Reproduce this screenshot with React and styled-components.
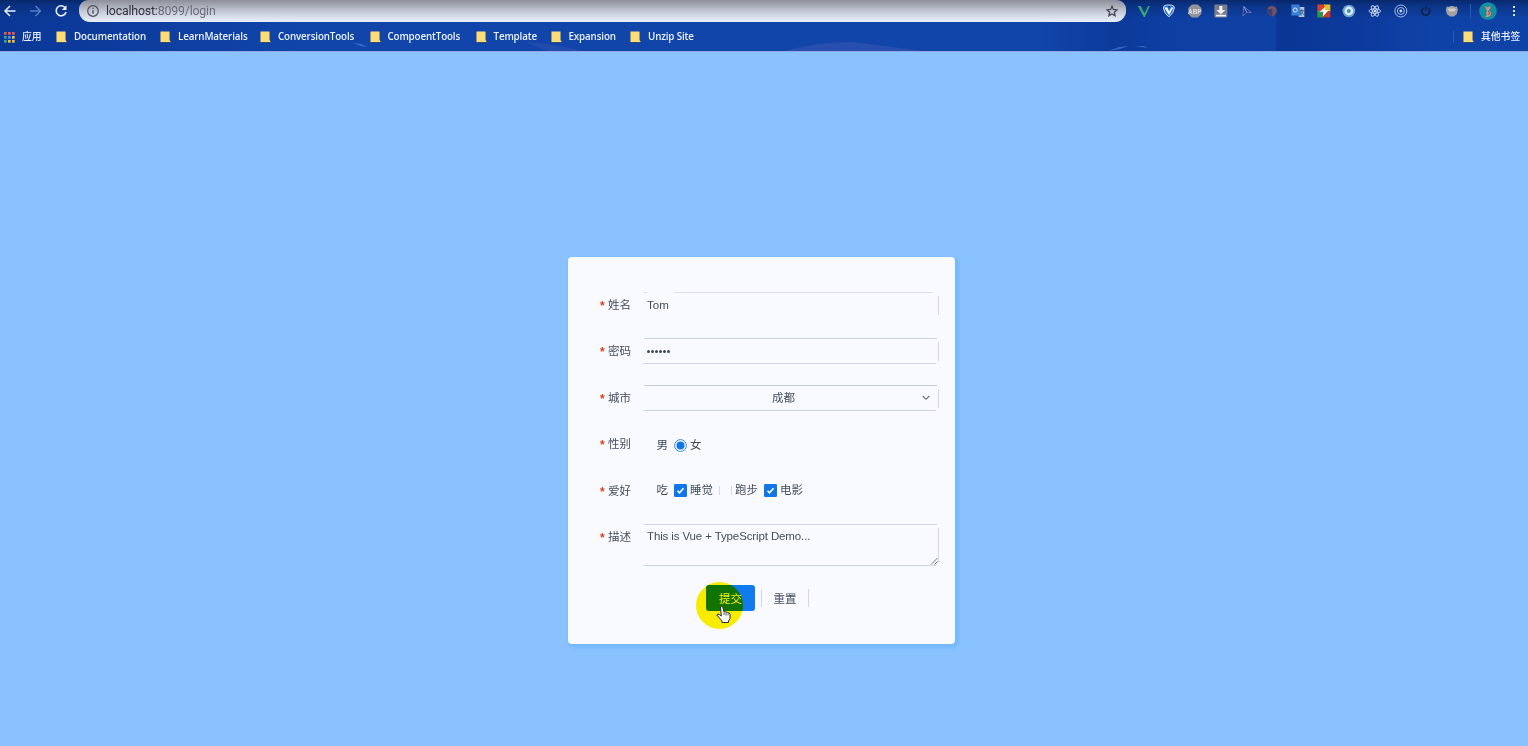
import React from "react";
import styled, { createGlobalStyle } from "styled-components";

const Global = createGlobalStyle`
  * { box-sizing: border-box; }
  body { margin: 0; overflow: hidden; font-family: "Liberation Sans", "Noto Sans CJK SC", sans-serif; }
`;

const Window = styled.div`
  display: flex;
  flex-direction: column;
  width: 1528px;
  height: 746px;
  background: #8ac2ff;
`;

const Chrome = styled.header`
  position: relative;
  height: 52px;
  flex: none;
  background: linear-gradient(90deg, #0b3896 0, #0c3b9c 100px, #1145a9 300px, #1145a9 1040px, #0b3a9a 1115px, #0e40a4 1190px, #0f41a5 1275px, #0a3795 1277px, #0c3a9c 1360px, #0f42a6 1430px, #0f42a6 100%);
  border-bottom: 1px solid #8fa5e6;
`;

const Scenery = styled.svg`
  position: absolute;
  left: 0;
  top: 0;
  pointer-events: none;
`;

const Toolbar = styled.div`
  position: relative;
  display: flex;
  align-items: center;
  height: 22px;
  background: linear-gradient(180deg, rgba(7, 36, 98, .85) 0, rgba(9, 45, 118, .6) 6px, rgba(11, 54, 145, 0) 18px);
`;

const NavButtons = styled.div`
  display: flex;
  gap: 10px;
  width: 79px;
  padding-left: 2px;
`;

const Address = styled.div`
  display: flex;
  align-items: center;
  width: 1047px;
  height: 22px;
  padding: 0 7px;
  border-radius: 9px 9px 11px 11px;
  background: linear-gradient(180deg, #8d8f9b 0, #a9adb8 6px, #c3c7d3 11px, #d5dbe8 16px, #eaf1fa 22px);
  font: 12.4px/22px Roboto, sans-serif;
  color: #696c76;
`;

const Url = styled.span`
  flex: 1;
  margin-left: 6px;
  letter-spacing: -.2px;
  b { font-weight: 400; color: #30333b; }
`;

const Extensions = styled.div`
  display: flex;
  width: 334px;
  margin-left: 4.8px;
  svg { flex: none; width: 25.7px; height: 18px; }
`;

const Divider = styled.i`
  width: 1px;
  height: ${(p) => p.$h}px;
  margin-left: ${(p) => p.$ml || 0}px;
  background: #2d59b5;
`;

const Avatar = styled.svg`
  margin-left: 8px;
  margin-right: 14px;
`;

const Bookmarks = styled.nav`
  position: relative;
  display: flex;
  align-items: center;
  height: 30px;
  padding-left: 4px;
  color: #eaf1ff;
  font: 600 9.8px/14px "Open Sans", "Noto Sans CJK SC", sans-serif;
`;

const Bookmark = styled.span`
  display: flex;
  align-items: center;
  flex: none;
  width: ${(p) => p.$w}px;
  margin-left: ${(p) => p.$ml || 0}px;
  gap: 7px;
  white-space: nowrap;
  letter-spacing: -.14px;
`;

const Cjk = styled.span`
  font-weight: 500;
  letter-spacing: 0;
`;

const Spacer = styled.span`
  flex: 1;
`;

const Page = styled.main`
  flex: 1;
  padding: 205px 0 0 568px;
`;

const Card = styled.form`
  position: relative;
  width: 387px;
  height: 387px;
  padding: 35px 16px 0 31px;
  border-radius: 4px;
  background: #f8faff;
  box-shadow: 2px 2px 3px 2px #76b9ff;
  color: #454d5c;
  font-size: 11.5px;
`;

const Rows = styled.div`
  display: grid;
  grid-template-rows: 46px 47px 46px 47px 46px 61px 26px;
`;

const Row = styled.div`
  display: flex;
`;

const Label = styled.label`
  display: flex;
  width: 43px;
  gap: 3px;
  padding-left: 1px;
  height: 26px;
  line-height: 27px;
  flex: none;
  white-space: nowrap;
  &::before { content: "*"; width: 5px; color: #d5451b; font: 700 12px/29px "Liberation Sans", sans-serif; }
`;

const line = (c) => `linear-gradient(${c}, ${c})`;

const gappedTop = "linear-gradient(90deg, #d8e3f1 3px, transparent 3px 30px, #d8e3f1 30px 289px, transparent 289px)";

const Field = styled.div`
  position: relative;
  display: flex;
  width: 297px;
  height: ${(p) => p.$h || 26}px;
  padding: 0 8px 0 5px;
  line-height: 26px;
  background-repeat: no-repeat;
  background-image: ${line("#cfd8e6")}, ${(p) => p.$top || line("#cfd8e6")}, ${(p) => line(p.$bottom || "#cfd8e6")};
  background-size: 1px calc(100% - 7px), 293px 1px, 293px 1px;
  background-position: right 4px, 2px 0, 1px 100%;
`;

const Password = styled.span`
  display: flex;
  align-items: center;
  gap: 1px;
  padding-top: 1px;
  i { width: 3px; height: 3px; border-radius: 50%; background: #3f4758; }
`;

const Chosen = styled.span`
  flex: 1;
  padding-right: 11px;
  text-align: center;
`;

const Chevron = styled.svg`
  margin: 9px 1px 0 -9px;
`;

const Grip = styled.svg`
  position: absolute;
  right: 0;
  bottom: 0;
`;

const Message = styled.span`
  line-height: 24px;
  letter-spacing: -.12px;
  white-space: nowrap;
`;

const Options = styled.div`
  display: flex;
  align-items: center;
  height: 26px;
  padding-left: 14.5px;
  margin-top: ${(p) => p.$mt}px;
  line-height: 26px;
  svg { margin: 0 3px 0 6px; }
`;

const BoxTrace = styled.i`
  width: 13px;
  height: 9px;
  margin: 1px 3px 0 6px;
  border: solid #d4dae5;
  border-width: 0 1px;
`;

const Actions = styled.div`
  display: flex;
  padding-left: 107px;
`;

const Submit = styled.button`
  width: 49px;
  height: 26px;
  padding: 0;
  border: 0;
  border-radius: 3px;
  background: #117aec;
  color: #fff;
  font: 11.5px/24px "Noto Sans CJK SC", sans-serif;
`;

const Reset = styled.button`
  width: 48px;
  height: 18px;
  margin: 4px 0 0 6px;
  padding: 0 0 1px;
  border: solid #cfd8e6;
  border-width: 0 1px;
  background: none;
  color: #454d5c;
  font: 11.5px/16px "Noto Sans CJK SC", sans-serif;
`;

const Spotlight = styled.i`
  position: absolute;
  left: 128px;
  top: 325px;
  width: 47px;
  height: 47px;
  border-radius: 50%;
  background: #fef000;
  mix-blend-mode: multiply;
`;

const Pointer = styled.svg`
  position: absolute;
  left: 148px;
  top: 348px;
`;

const Folder = () => (
  <svg width="11" height="13" viewBox="0 0 11 13">
    <path d="M0 1h10v8.500l1 2.500H0z" fill="#384d68" opacity=".8" />
    <path d="M.5 .5h9v8.500l1 1.500V11H.5z" fill="#fbdc79" />
  </svg>
);

const Apps = () => {
  const colors = ["#ea5b50", "#ea5b50", "#ea5b50", "#36a77c", "#4d8ff5", "#f4bd3a", "#36a77c", "#f4bd3a", "#f4bd3a"];
  return (
    <svg width="11" height="11" viewBox="0 0 11 11">
      {colors.map((c, i) => (
        <rect key={i} x={(i % 3) * 4} y={Math.floor(i / 3) * 4} width="2.7" height="2.7" fill={c} />
      ))}
    </svg>
  );
};

const Ext = ({ children }) => <svg viewBox="-12.85 -9 25.7 18">{children}</svg>;

const Check = () => (
  <svg width="13" height="13" viewBox="0 0 13 13">
    <rect width="13" height="13" rx="1.3" fill="#1177e8" />
    <path d="M3.5 6.700l2 2.100 4-4.600" fill="none" stroke="#fff" strokeWidth="1.600" />
  </svg>
);

const bookmarks = [
  ["Documentation", 104],
  ["LearnMaterials", 100],
  ["ConversionTools", 109.5],
  ["CompoentTools", 106],
  ["Template", 75],
  ["Expansion", 79.5],
  ["Unzip Site", 80],
];

export default function App() {
  return (
    <Window>
      <Global />
      <Chrome>
        <Scenery width="1528" height="51">
          <path d="M525 42q30 2 58 9h-36z" fill="#2850b1" opacity=".7" />
          <path d="M785 51q30-9 68-9l70 9z" fill="#284eae" />
          <path d="M353 43l8 1 6 3-6-1z" fill="#3d70ca" />
          <path d="M1108 51l11-4 9-1-8 3zM1135 46h9l4 2z" fill="#3566bd" />
        </Scenery>
        <Toolbar>
          <NavButtons>
            <svg width="15" height="16" viewBox="0 0 15 16" fill="none" stroke="#e8f0ff" strokeWidth="1.5">
              <path d="M13.500 8H3M8 3L3 8l5 5" />
            </svg>
            <svg width="15" height="16" viewBox="0 0 15 16" fill="none" stroke="#547cc6" strokeWidth="1.4">
              <path d="M3 8h10M8.500 3l5 5-5 5" />
            </svg>
            <svg width="17" height="16" viewBox="0 0 17 16" fill="none" stroke="#e8f0ff" strokeWidth="1.6">
              <path d="M13.200 4.800A5 5 0 1 0 14 9" />
              <path d="M14.500 2.300v4.700H9.800z" fill="#e8f0ff" stroke="none" />
            </svg>
          </NavButtons>
          <Address>
            <svg width="14" height="14" viewBox="0 0 14 14" fill="none" stroke="#4c4f59" strokeWidth="1.200">
              <circle cx="7" cy="7" r="5.300" />
              <path d="M7 6.300v3.500M7 3.800v1.300" strokeWidth="1.400" />
            </svg>
            <Url><b>localhost:</b>8099/login</Url>
            <svg width="14" height="14" viewBox="0 0 14 14" fill="none" stroke="#43464f" strokeWidth="1.300">
              <path d="M7 2.300l1.400 3.200 3.500.4-2.600 2.300.8 3.500L7 9.900l-3.100 1.800.8-3.500-2.600-2.300 3.500-.4z" />
            </svg>
          </Address>
          <Extensions>
            <Ext>
              <path d="M-6-5h3l3.500 7 3.500-7h2L1 6H0z" fill="#36a77a" />
              <path d="M-3-5h2L.8-1.500 2.800-5h1.500L.7 2z" fill="#173c78" />
            </Ext>
            <Ext>
              <path d="M-5.500-3q0-2.700 3-3h5q3 .3 3 3Q5 2 0 6-5 2-5.500-3z" fill="#2c79cf" stroke="#c8daf0" />
              <path d="M-4.500-3.500h3L.2.500l2.300-4h2L.2 4z" fill="#fff" />
              <path d="M-1-5h2.500L.3-2z" fill="#173e8b" />
            </Ext>
            <Ext>
              <path d="M-3-6.500h6L6.500-3v6L3 6.500h-6L-6.500 3v-6z" fill="#929497" />
              <text y="2.500" textAnchor="middle" fontFamily="Liberation Sans" fontWeight="700" fontSize="6.500" fill="#dcdee4">ABP</text>
            </Ext>
            <Ext>
              <rect x="-6.500" y="-6.500" width="13" height="13" rx="1" fill="#777d89" />
              <path d="M-1.500-5h3v4h3L0 3.300-4.500-1h3zM-5 3.700H5v1.700H-5z" fill="#f2f4f7" />
            </Ext>
            <Ext>
              <path d="M-3-4.500l7.500 6H0L-4 5z" fill="#17348a" stroke="#596fb8" />
              <path d="M-3-4.500L0 1.500" stroke="#9da9da" />
            </Ext>
            <Ext>
              <circle r="5.200" fill="#3f426f" />
              <path d="M-4.500-2.500Q0-7 4-3l1 3-3 5-2 .5 1-5z" fill="#745460" />
              <path d="M-4-1l5-1-3 4z" fill="#203d91" />
            </Ext>
            <Ext>
              <path d="M-1-4h7.500v10H1z" fill="#b9c5d8" />
              <path d="M-6.500-6.500H1.500L4 4.500h-10.500z" fill="#397fd8" />
              <circle cx="-2.600" cy="-1" r="2" fill="none" stroke="#d5e7ff" />
              <path d="M2-.5h4M4-2v2M5.500 0Q4 3 2.500 3M3 0l3 4" stroke="#4a6081" fill="none" strokeWidth=".9" />
            </Ext>
            <Ext>
              <path d="M-6.500-6.500H1L-6.500 1z" fill="#d8402f" />
              <path d="M0-6.500h6.500V1H0z" fill="#e8bd24" />
              <path d="M-6.500 0H0v6.500h-6.500z" fill="#329547" />
              <path d="M0 0h6.500v6.500H0z" fill="#c83a2c" />
              <path d="M-6.500 0l5-5h3l-4 5z" fill="#d8402f" />
              <path d="M1.500-4L-4.500.8h4L-1 5.500 5-1H1z" fill="#fff" />
            </Ext>
            <Ext>
              <circle r="6.300" fill="#69a4cd" />
              <circle r="4.400" fill="#d9edf5" />
              <circle r="2" fill="#4d89ac" />
            </Ext>
            <Ext>
              <g fill="none" stroke="#bdceed" strokeWidth="1">
                <ellipse rx="5.800" ry="2.200" />
                <ellipse rx="5.800" ry="2.200" transform="rotate(60)" />
                <ellipse rx="5.800" ry="2.200" transform="rotate(120)" />
              </g>
              <circle r="1.200" fill="#dce7fb" />
            </Ext>
            <Ext>
              <g fill="none" stroke="#aabce5" strokeWidth="1">
                <circle r="6" />
                <circle r="3.500" />
              </g>
              <circle r="1.500" fill="#cbd7f2" />
            </Ext>
            <Ext>
              <path d="M-2.500-3.200A4.100 4.100 0 1 0 2.500-3.200M0-5v4.500" fill="none" stroke="#132449" strokeWidth="1.700" />
            </Ext>
            <Ext>
              <path d="M-6-1.500l1-3 2 .5 1.500-1h3L3-4l2-.5 1 3-1 4.500-3 2.500h-4L-5 3z" fill="#a3a1a1" />
              <path d="M-4-1.500l2-1.500 2 1 2-1 2 1.500-2 2h-4z" fill="#d0cecb" />
            </Ext>
          </Extensions>
          <Divider $h={14} $ml={5} />
          <Avatar width="18" height="18" viewBox="0 0 18 18">
            <circle cx="9" cy="9" r="8.800" fill="#138f9f" />
            <path d="M6 4l2.500 1.500L11 4l.5 2-2 2.500 2.500 2-.5 3-2.500 1.500H6l2-2-1-2 1-2z" fill="#dd8d7d" />
            <path d="M9 9l1.500 2-1 2" fill="none" stroke="#a24e54" />
          </Avatar>
          <svg width="6" height="14" viewBox="0 0 6 14" fill="#d9e6fc">
            <rect x="2" y="2" width="2" height="2" />
            <rect x="2" y="6" width="2" height="2" />
            <rect x="2" y="10" width="2" height="2" />
          </svg>
        </Toolbar>
        <Bookmarks>
          <Bookmark $w={52}><Apps /><Cjk>应用</Cjk></Bookmark>
          {bookmarks.map(([name, w]) => (
            <Bookmark key={name} $w={w}><Folder />{name}</Bookmark>
          ))}
          <Spacer />
          <Divider $h={12} />
          <Bookmark $w={65} $ml={9}><Folder /><Cjk>其他书签</Cjk></Bookmark>
        </Bookmarks>
      </Chrome>
      <Page>
        <Card>
          <Rows>
            <Row>
              <Label>姓名</Label>
              <Field $top={gappedTop} $bottom="transparent">Tom</Field>
            </Row>
            <Row>
              <Label>密码</Label>
              <Field><Password><i /><i /><i /><i /><i /><i /></Password></Field>
            </Row>
            <Row>
              <Label>城市</Label>
              <Field $top={line("#c4cbd6")}>
                <Chosen>成都</Chosen>
                <Chevron width="8" height="8" viewBox="0 0 8 8" fill="none" stroke="#686e79" strokeWidth="1.100">
                  <path d="M.7 2L4 5.300 7.300 2" />
                </Chevron>
              </Field>
            </Row>
            <Row>
              <Label>性别</Label>
              <Options $mt={1}>
                男
                <svg width="13" height="13" viewBox="0 0 13 13">
                  <circle cx="6.500" cy="6.500" r="5.900" fill="#fff" stroke="#3387e8" />
                  <circle cx="6.500" cy="6.500" r="4" fill="#1177e8" />
                </svg>
                女
              </Options>
            </Row>
            <Row>
              <Label>爱好</Label>
              <Options $mt={-1}>吃<Check />睡觉<BoxTrace />跑步<Check />电影</Options>
            </Row>
            <Row>
              <Label>描述</Label>
              <Field $h={42}>
                <Message>This is Vue + TypeScript Demo...</Message>
                <Grip width="9" height="9" viewBox="0 0 9 9" stroke="#616773" strokeWidth=".9">
                  <path d="M1 7.500L7.500 1M4.500 7.500l3-3" />
                </Grip>
              </Field>
            </Row>
            <Actions>
              <Submit type="button">提交</Submit>
              <Reset type="button">重置</Reset>
            </Actions>
          </Rows>
          <Spotlight />
          <Pointer width="17" height="20" viewBox="0 0 17 20">
            <path d="M4.500 2q1.300-1.500 2.300 0L8 7q1.300-.8 2 .3 1.500-.6 2 .6 1.700-.3 2 1.100v4.500L12.500 16v1.500H6V16L3 12.500.8 10q.7-1.500 2.700-.3L5.300 11z" fill="#fff" stroke="#222b3d" />
            <path d="M8 7.500v2.500M10 8v2.500M12 8.500v2" stroke="#222b3d" strokeWidth=".8" />
          </Pointer>
        </Card>
      </Page>
    </Window>
  );
}
